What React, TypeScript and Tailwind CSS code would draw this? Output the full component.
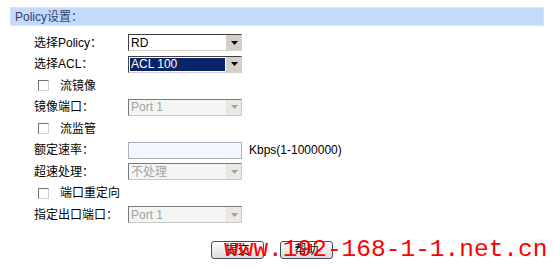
import React from 'react';

const cjk = { fontFamily: '"Liberation Sans", "Noto Sans CJK SC", sans-serif' };

interface SelectProps {
  value: string;
  disabled?: boolean;
  selected?: boolean;
}

const Arrow = ({ disabled }: { disabled?: boolean }) => (
  <div
    className={
      disabled
        ? 'flex h-full w-[15px] items-center justify-center border-l border-[#e2e2e2] bg-[#ece9e4]'
        : 'flex h-full w-[15px] items-center justify-center border-l border-[#d4d0c8] bg-[#d4d0c8]'
    }
  >
    <svg width="7" height="4" viewBox="0 0 7 4">
      <polygon points="0,0 7,0 3.5,4" fill={disabled ? '#a0a0a0' : '#000'} />
    </svg>
  </div>
);

const Select = ({ value, disabled, selected }: SelectProps) => (
  <div
    className={
      disabled
        ? 'flex h-[17px] w-[114px] shrink-0 items-center border border-[#7a7a7a] border-b-[#c8c8c8] border-r-[#c8c8c8] bg-[#f4f4f4]'
        : 'flex h-[17px] w-[114px] shrink-0 items-center border border-[#404040] border-b-[#d4d0c8] border-r-[#d4d0c8] bg-white'
    }
  >
    <div className="flex h-full flex-1 items-center p-[1px]">
      <div
        className={
          selected
            ? 'flex h-full w-full items-center bg-[#0a246a] pl-[1px] text-[12px] text-white'
            : disabled
              ? 'flex h-full w-full items-center pl-[1px] text-[12px] text-[#a3a3a3]'
              : 'flex h-full w-full items-center pl-[1px] text-[12px] text-black'
        }
      >
        {value}
      </div>
    </div>
    <Arrow disabled={disabled} />
  </div>
);

const Label = ({ children }: { children: React.ReactNode }) => (
  <div className="w-[128px] shrink-0 pl-[34px] text-[12px] text-black whitespace-nowrap" style={cjk}>
    {children}
  </div>
);

const CheckRow = ({ label }: { label: string }) => (
  <div className="flex h-[21.5px] items-center">
    <div className="ml-[38px] h-[11px] w-[11px] border border-[#707070] border-b-[#d0d0d0] border-r-[#d0d0d0] bg-white" />
    <span className="ml-[11px] text-[12px] text-black">{label}</span>
  </div>
);

const Btn = ({ children }: { children: React.ReactNode }) => (
  <button className="flex h-[18px] w-[53px] items-center justify-center rounded-[3px] border border-[#3d4f68] bg-gradient-to-b from-white to-[#dedbd4] text-[12px] text-black">
    {children}
  </button>
);

export default function App() {
  return (
    <div className="relative h-[269px] w-[554px] overflow-hidden bg-white" style={cjk}>
      <div className="pt-[7px] pl-[10px] pr-[10px]">
        <div className="flex h-[19px] items-center border border-[#d5e4f8] bg-[#c4dafa] pl-[4px] text-[12px] text-[#344272]">
          Policy设置：
        </div>
      </div>
      <div className="mt-[6px] flex flex-col">
        <div className="flex h-[21.5px] items-center">
          <Label>选择Policy：</Label>
          <Select value="RD" />
        </div>
        <div className="flex h-[21.5px] items-center">
          <Label>选择ACL：</Label>
          <Select value="ACL 100" selected />
        </div>
        <CheckRow label="流镜像" />
        <div className="flex h-[21.5px] items-center">
          <Label>镜像端口：</Label>
          <Select value="Port 1" disabled />
        </div>
        <CheckRow label="流监管" />
        <div className="flex h-[21.5px] items-center">
          <Label>额定速率：</Label>
          <div className="h-[17px] w-[114px] shrink-0 border border-[#a9b3bf] bg-[#f3f6fb]" />
          <span className="ml-[7px] text-[12px] text-black">Kbps(1-1000000)</span>
        </div>
        <div className="flex h-[21.5px] items-center">
          <Label>超速处理：</Label>
          <Select value="不处理" disabled />
        </div>
        <CheckRow label="端口重定向" />
        <div className="flex h-[21.5px] items-center">
          <Label>指定出口端口：</Label>
          <Select value="Port 1" disabled />
        </div>
        <div className="mt-[15px] flex gap-[16px] pl-[211px]">
          <Btn>提交</Btn>
          <Btn>帮助</Btn>
        </div>
      </div>
      <div
        className="absolute left-[224px] top-[236px] text-[24.5px] leading-[28px] text-[#ff0000] whitespace-nowrap"
        style={{ fontFamily: '"Liberation Mono", monospace' }}
      >
        www.192-168-1-1.net.cn
      </div>
    </div>
  );
}
